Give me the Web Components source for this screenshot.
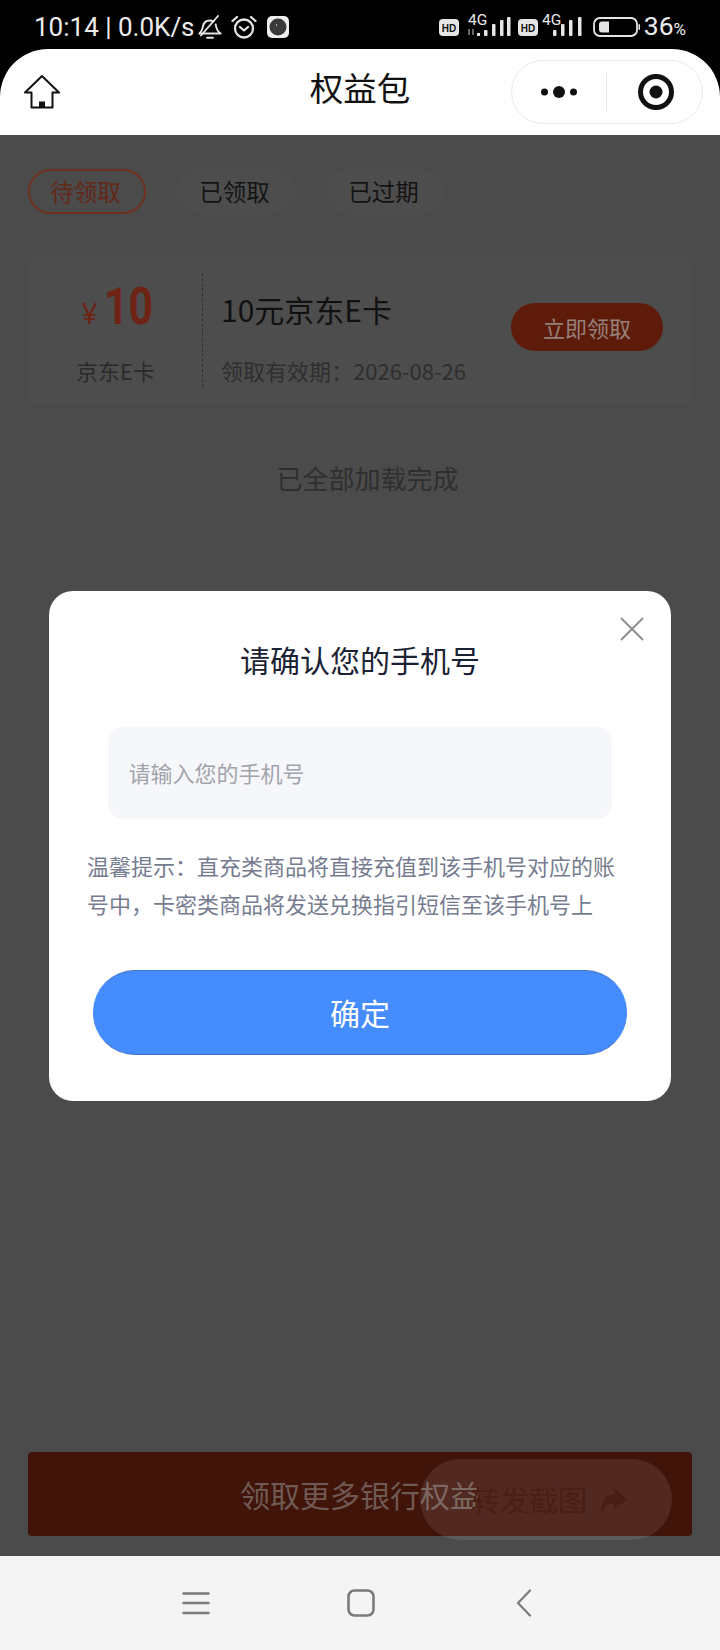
<!DOCTYPE html>
<html lang="zh-CN">
<head>
<meta charset="utf-8">
<title>权益包</title>
<style>
html,body{margin:0;padding:0;background:#000;}
body{width:720px;height:1650px;overflow:hidden;font-family:"Noto Sans CJK SC","Noto Sans",sans-serif;}
</style>
</head>
<body>
<app-shell>
  <status-bar slot="status"></status-bar>
  <mini-nav slot="nav" title-text="权益包"></mini-nav>
  <tab-pill active>待领取</tab-pill>
  <tab-pill>已领取</tab-pill>
  <tab-pill>已过期</tab-pill>
  <coupon-card slot="card"></coupon-card>
  <span slot="done">已全部加载完成</span>
  <bottom-bar slot="bottom">领取更多银行权益</bottom-bar>
  <float-share slot="over">转发截图</float-share>
  <phone-modal slot="over"></phone-modal>
  <system-nav slot="sys"></system-nav>
</app-shell>
<script>
function def(name, html, init){
  customElements.define(name, class extends HTMLElement{
    constructor(){super();this.attachShadow({mode:'open'}).innerHTML=html;}
    connectedCallback(){ if(init) init(this); }
  });
}
def('app-shell',`<style>
:host{display:flex;flex-direction:column;width:720px;height:1650px;background:#000;}
.main{position:relative;flex:1;display:flex;flex-direction:column;background:#4b4b4b;padding:34px 28px 20px;box-sizing:border-box;min-height:0;}
.tabs{display:flex;gap:31px;}
.done{margin-top:56px;padding-left:15px;text-align:center;font-size:26px;line-height:34px;color:#2f2f2f;}
.spacer{flex:1;}
</style>
<slot name="status"></slot><slot name="nav"></slot>
<div class="main">
  <div class="tabs"><slot></slot></div>
  <slot name="card"></slot>
  <div class="done"><slot name="done"></slot></div>
  <div class="spacer"></div>
  <slot name="bottom"></slot>
  <slot name="over"></slot>
</div>
<slot name="sys"></slot>`);

def('status-bar',`<style>
:host{display:flex;align-items:center;height:49px;background:#000;color:#ececec;font-family:Roboto,"Liberation Sans",sans-serif;box-sizing:border-box;padding:5px 0 0 34px;}
.t{font-size:26px;line-height:44px;white-space:nowrap;}
svg{display:block;flex:none;}
.r{margin-left:auto;display:flex;align-items:center;padding-right:34px;}
.pct{font-size:26.500px;line-height:30px;margin-left:4px;white-space:nowrap;}
.pct small{font-size:17px;}
</style>
<span class="t">10:14 | 0.0K/s</span>
<svg style="margin-left:3px" width="24" height="24" viewBox="0 0 24 24" fill="none" stroke="#e4e4e4" stroke-width="1.900" stroke-linecap="round" stroke-linejoin="round"><path d="M1.500 18.500c2.500-2 2.800-3.800 3.300-6.500.7-4 3.400-6.500 7-6.500 1.300 0 2.600.4 3.700 1.100"/><path d="M17.700 9.500c.6 3.200.8 6.500 5 9H1.500"/><path d="M3 20.500 20 1"/><path d="M9 22.800h6"/></svg>
<svg style="margin-left:9px" width="26" height="24" viewBox="0 0 26 24" fill="none" stroke="#e4e4e4" stroke-width="2.300" stroke-linecap="round" stroke-linejoin="round"><circle cx="13" cy="13.500" r="9"/><path d="M9 12 13 15.500 17 12"/><path d="M1.500 6 6 2M24.500 6 20 2"/></svg>
<svg style="margin-left:10px" width="22" height="22" viewBox="0 0 22 22"><rect width="22" height="22" rx="5" fill="#eee"/><circle cx="11" cy="11" r="8.500" fill="#3a3a3a"/><circle cx="9.500" cy="9" r=".7" fill="#ddd"/></svg>
<div class="r">
<svg width="20" height="17" viewBox="0 0 20 17"><rect width="20" height="17" rx="4" fill="#e6e6e6"/><text x="10" y="12.500" text-anchor="middle" font-size="10" font-weight="700" font-family="Liberation Sans" fill="#111">HD</text></svg>
<svg style="margin-left:9px" width="43" height="32" viewBox="0 -3 43 32" fill="#e6e6e6"><text x="0" y="11" font-size="15.500" font-family="Roboto">4G</text><rect x="0" y="15" width="2" height="6" fill="#666"/><rect x="4" y="15" width="2" height="6" fill="#666"/><rect x="9" y="19" width="3" height="3"/><rect x="16" y="16" width="3.500" height="6" rx="1"/><rect x="24" y="10" width="3.500" height="12" rx="1"/><rect x="32" y="6" width="3.500" height="16" rx="1"/><rect x="39" y="3" width="3.500" height="19" rx="1"/></svg>
<svg style="margin-left:7px" width="20" height="17" viewBox="0 0 20 17"><rect width="20" height="17" rx="4" fill="#e6e6e6"/><text x="10" y="12.500" text-anchor="middle" font-size="10" font-weight="700" font-family="Liberation Sans" fill="#111">HD</text></svg>
<svg style="margin-left:4px" width="42" height="32" viewBox="0 -3 42 32" fill="#e6e6e6"><text x="0" y="11" font-size="15.500" font-family="Roboto">4G</text><rect x="11" y="16" width="3.500" height="6" rx="1"/><rect x="19" y="10" width="3.500" height="12" rx="1"/><rect x="27" y="6" width="3.500" height="16" rx="1"/><rect x="36" y="3" width="3.500" height="19" rx="1"/></svg>
<svg style="margin-left:9px" width="47" height="20" viewBox="0 0 47 20"><rect x="1" y="1" width="43" height="18" rx="6" fill="none" stroke="#e6e6e6" stroke-width="1.800"/><path d="M9 4.500h7v11H9a3 3 0 0 1-3-3v-5a3 3 0 0 1 3-3z" fill="#e6e6e6"/><rect x="45.500" y="7" width="1.500" height="6" rx=".7" fill="#e6e6e6"/></svg>
<span class="pct">36<small>%</small></span>
</div>`);

def('mini-nav',`<style>
:host{display:block;height:86px;background:#fff;border-radius:48px 48px 0 0;}
.row{display:grid;grid-template-columns:192px 1fr 192px;align-items:center;height:100%;box-sizing:border-box;padding:0 17px 0 17px;}
.home{display:block;margin-left:7px;}
h1{margin:0;text-align:center;font-size:33.500px;font-weight:400;line-height:76px;color:#111;height:86px;box-sizing:border-box;}
.cap{display:flex;align-items:center;height:64px;box-sizing:border-box;border:1px solid #e9e9e9;border-radius:32px;}
.a,.b{flex:1;height:100%;display:flex;align-items:center;justify-content:center;}
.a{padding-left:1px;}
.b{padding-left:3px;}
.sep{width:1px;height:38px;background:#e6e6e6;flex:none;}
</style>
<div class="row">
<svg class="home" width="36" height="36" viewBox="0 0 36 36" fill="none" stroke="#111" stroke-width="2" stroke-linejoin="round"><path d="M18 2 35 18.500H28.500V33.500H7.500V18.500H1Z"/><path d="M15 33.500V27.500H21V33.500" fill="#111" stroke="none"/></svg>
<h1 id="t"></h1>
<div class="cap">
  <div class="a"><svg width="38" height="14" viewBox="0 0 38 14" fill="#111"><circle cx="4.500" cy="7" r="3.500"/><circle cx="19" cy="7" r="6"/><circle cx="33.500" cy="7" r="3.500"/></svg></div>
  <div class="sep"></div>
  <div class="b"><svg width="36" height="36" viewBox="0 0 36 36" fill="none"><circle cx="18" cy="18" r="15.500" stroke="#111" stroke-width="5"/><circle cx="18" cy="18" r="6.500" fill="#111"/></svg></div>
</div>
</div>`, el=>{el.shadowRoot.getElementById('t').textContent=el.getAttribute('title-text');});

def('tab-pill',`<style>
:host{display:flex;align-items:center;justify-content:center;box-sizing:border-box;width:118px;height:45px;border-radius:23px;font-size:23.500px;line-height:45px;color:#141414;background:#4d4d4d;padding-right:3px;}
:host([active]){color:#632818;background:transparent;border:2px solid #70301f;}
</style><slot></slot>`);

def('coupon-card',`<style>
:host{display:flex;box-sizing:border-box;width:662px;height:150px;margin:41px 0 0 1px;background:#4d4d4d;border-radius:10px;padding:18px 0 18px 0;}
.l{flex:none;width:173px;display:flex;flex-direction:column;align-items:center;}
.amt{display:flex;align-items:baseline;height:70px;line-height:70px;color:#6e2414;font-family:"Noto Sans",Roboto,sans-serif;margin-top:-1px;padding-left:4px;}
.y{font-size:29px;margin-right:6px;}
.n{font-size:52px;font-weight:700;font-family:Roboto,sans-serif;display:inline-block;transform:scaleX(.82);transform-origin:left center;margin-right:-10px;}
.sub{margin-top:13px;font-size:22px;line-height:30px;color:#2b2b2b;}
.dash{flex:none;width:0;border-left:1.500px dashed #303030;height:114px;}
.m{flex:1;padding:16px 0 0 18px;}
.title{font-size:30px;line-height:40px;color:#111;font-weight:400;white-space:nowrap;}
.date{margin-top:26px;font-size:22px;line-height:30px;color:#2f2f2f;white-space:nowrap;}
.btn{align-self:center;flex:none;width:152px;height:48px;border-radius:24px;background:#5f1b0a;color:#94827a;font-size:22px;line-height:48px;text-align:center;margin:0 28px 0 0;position:relative;top:-3px;}
</style>
<div class="l"><div class="amt"><span class="y">¥</span><span class="n">10</span></div><div class="sub">京东E卡</div></div>
<div class="dash"></div>
<div class="m"><div class="title">10元京东E卡</div><div class="date">领取有效期：2026-08-26</div></div>
<div class="btn">立即领取</div>`);

def('bottom-bar',`<style>
:host{display:block;flex:none;width:664px;height:84px;background:#41140a;border-radius:4px;color:#6f5a53;font-size:30px;line-height:84px;text-align:center;}
</style><slot></slot>`);

def('float-share',`<style>
:host{position:absolute;left:420px;top:1324px;width:252px;height:81px;border-radius:41px;background:rgba(255,255,255,.09);display:flex;align-items:center;box-sizing:border-box;padding-left:51px;color:#4a1e14;font-size:29px;line-height:81px;white-space:nowrap;}
svg{margin-left:12px;flex:none;}
</style><slot></slot><svg width="28" height="28" viewBox="0 0 28 28" fill="#4a1e14"><path d="M15 2 28 13 15 24V17C9 17 5 20 3 27 1 16 6 9 15 8Z"/></svg>`);

def('phone-modal',`<style>
:host{position:absolute;left:49px;top:456px;width:622px;height:510px;box-sizing:border-box;background:#fff;border-radius:24px;display:flex;flex-direction:column;align-items:center;}
.x{position:absolute;right:27px;top:26px;display:block;}
h2{margin:45px 0 0;font-size:30px;font-weight:400;line-height:46px;color:#1a2233;}
.inp{box-sizing:border-box;width:504px;height:92px;margin:45px 0 0 -1px;background:#f6f7fb;border-radius:16px;padding-left:21px;font-size:22px;line-height:90px;color:#a2a3ab;}
.hint{align-self:flex-start;box-sizing:border-box;width:534px;margin:27px 0 0 38px;font-size:22px;line-height:38px;color:#767c90;text-spacing-trim:space-all;}
.ok{width:534px;height:85px;margin-top:48px;box-sizing:border-box;background:#458cff;border:1px solid #3f74c6;border-left-color:#458cff;border-right-color:#458cff;border-radius:42px;color:#fff;font-size:30px;line-height:82px;text-align:center;}
</style>
<svg class="x" width="24" height="24" viewBox="0 0 24 24" stroke="#8b8b8b" stroke-width="1.800" fill="none"><path d="M1 1 23 23M23 1 1 23"/></svg>
<h2>请确认您的手机号</h2>
<div class="inp">请输入您的手机号</div>
<div class="hint">温馨提示：直充类商品将直接充值到该手机号对应的账号中，卡密类商品将发送兑换指引短信至该手机号上</div>
<div class="ok">确定</div>`);

def('system-nav',`<style>
:host{display:flex;align-items:center;flex:none;height:94px;background:#f4f4f4;box-sizing:border-box;padding:0 0 0 182px;}
svg{display:block;flex:none;}
</style>
<svg width="28" height="24" viewBox="0 0 28 24" stroke="#7a7a7a" stroke-width="2.400" stroke-linecap="round"><path d="M1.500 2.500H26.500M1.500 12H26.500M1.500 22H26.500"/></svg>
<svg style="margin-left:137px" width="28" height="28" viewBox="0 0 28 28" fill="none" stroke="#7a7a7a" stroke-width="2.600"><rect x="1.500" y="1.500" width="25" height="25" rx="6"/></svg>
<svg style="margin-left:141px" width="16" height="28" viewBox="0 0 16 28" fill="none" stroke="#7a7a7a" stroke-width="2.200" stroke-linecap="round" stroke-linejoin="round"><path d="M14 1.500 2 14 14 26.500"/></svg>`);
</script>
</body>
</html>
